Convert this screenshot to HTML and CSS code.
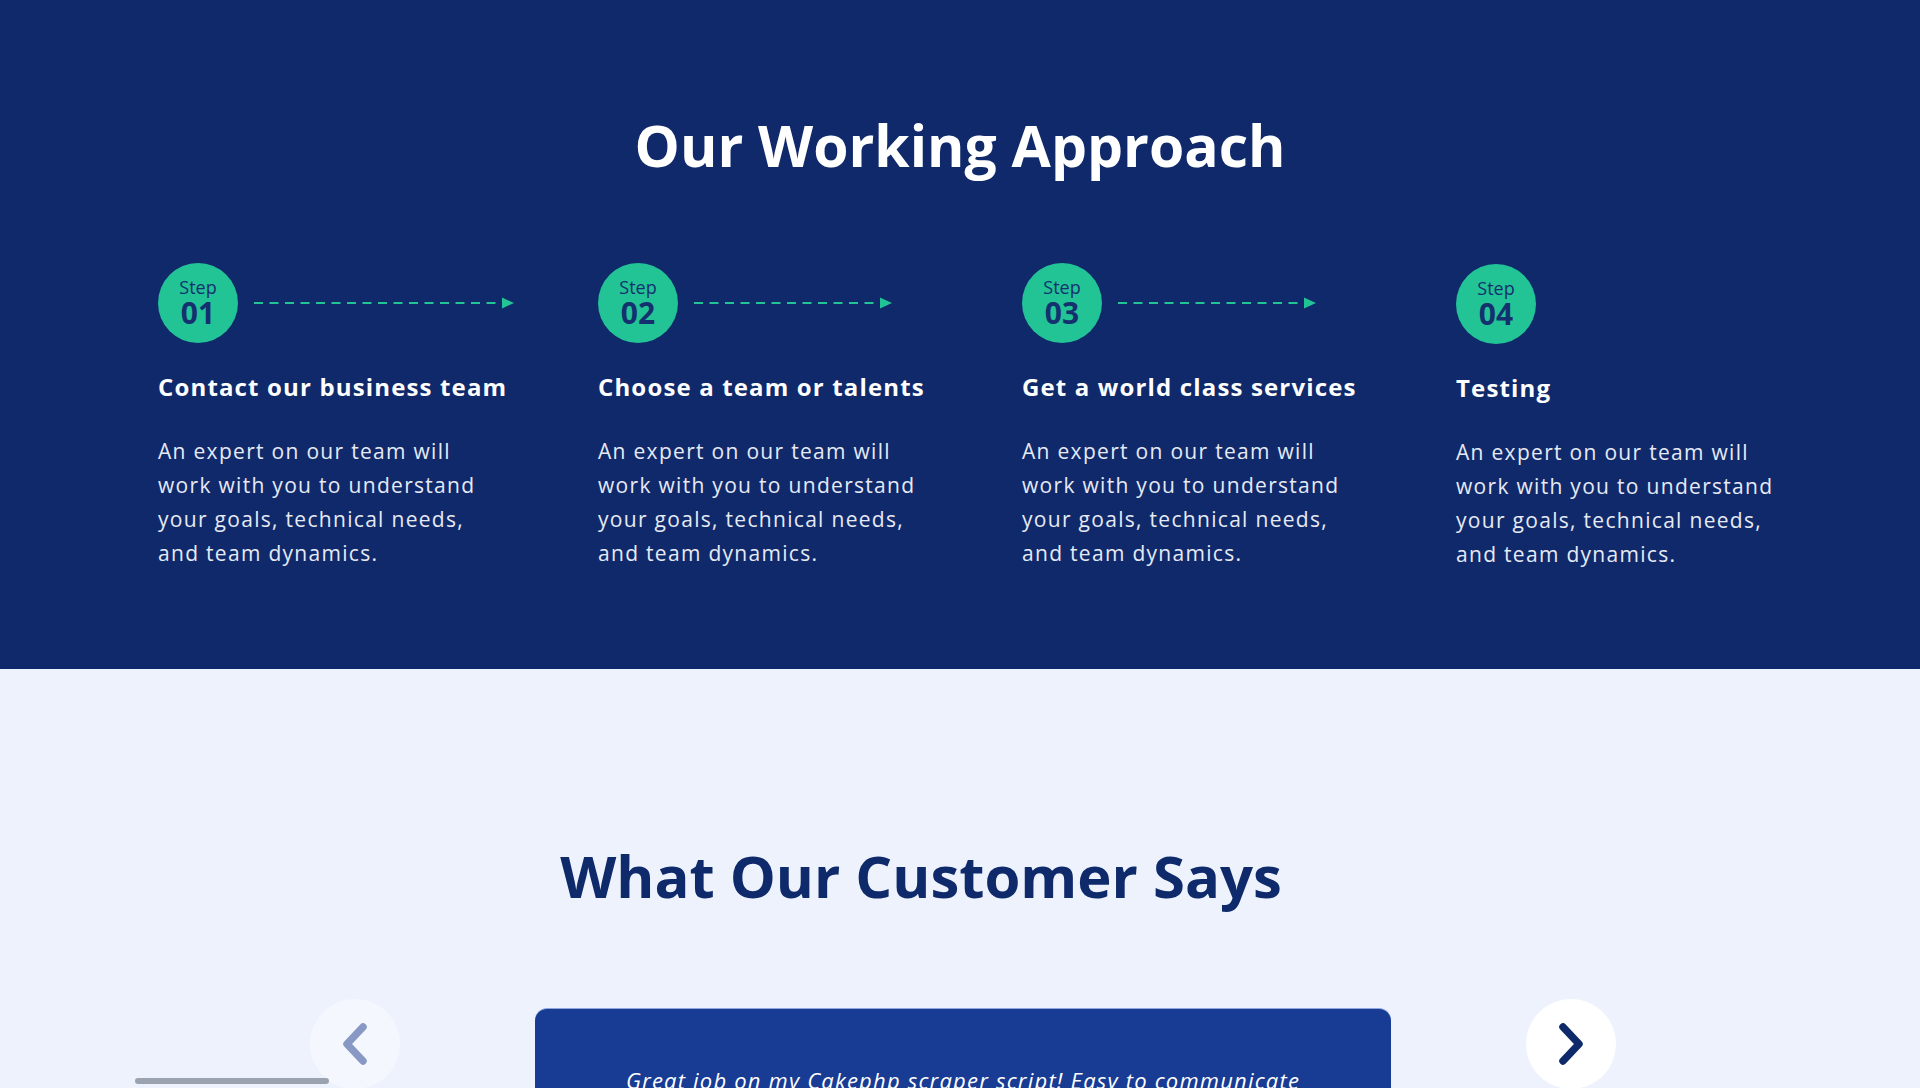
FILE: index.html
```html
<!DOCTYPE html>
<html lang="en">
<head>
<meta charset="utf-8">
<title>Our Working Approach</title>
<link rel="stylesheet" href="styles.css">
</head>
<body>
<section class="approach">
  <h2 class="approach-title">Our Working Approach</h2>
  <div class="steps">
    <div class="step">
      <div class="step-head">
        <div class="step-badge"><span class="step-label">Step</span><span class="step-num">01</span></div>
        <svg class="step-arrow" viewBox="0 0 260 14" width="260" height="14"><line x1="0" y1="7" x2="250" y2="7" stroke="#22c496" stroke-width="2" stroke-dasharray="9 6.5"/><path d="M248 1.5 L260 7 L248 12.5 Z" fill="#22c496"/></svg>
      </div>
      <h3 class="step-title">Contact our business team</h3>
      <p class="step-text">An expert on our team will<br>work with you to understand<br>your goals, technical needs,<br>and team dynamics.</p>
    </div>
    <div class="step">
      <div class="step-head">
        <div class="step-badge"><span class="step-label">Step</span><span class="step-num">02</span></div>
        <svg class="step-arrow" viewBox="0 0 198 14" width="198" height="14"><line x1="0" y1="7" x2="188" y2="7" stroke="#22c496" stroke-width="2" stroke-dasharray="9 6.5"/><path d="M186 1.5 L198 7 L186 12.5 Z" fill="#22c496"/></svg>
      </div>
      <h3 class="step-title">Choose a team or talents</h3>
      <p class="step-text">An expert on our team will<br>work with you to understand<br>your goals, technical needs,<br>and team dynamics.</p>
    </div>
    <div class="step">
      <div class="step-head">
        <div class="step-badge"><span class="step-label">Step</span><span class="step-num">03</span></div>
        <svg class="step-arrow" viewBox="0 0 198 14" width="198" height="14"><line x1="0" y1="7" x2="188" y2="7" stroke="#22c496" stroke-width="2" stroke-dasharray="9 6.5"/><path d="M186 1.5 L198 7 L186 12.5 Z" fill="#22c496"/></svg>
      </div>
      <h3 class="step-title">Get a world class services</h3>
      <p class="step-text">An expert on our team will<br>work with you to understand<br>your goals, technical needs,<br>and team dynamics.</p>
    </div>
    <div class="step step-last">
      <div class="step-head">
        <div class="step-badge"><span class="step-label">Step</span><span class="step-num">04</span></div>
      </div>
      <h3 class="step-title">Testing</h3>
      <p class="step-text">An expert on our team will<br>work with you to understand<br>your goals, technical needs,<br>and team dynamics.</p>
    </div>
  </div>
</section>

<section class="reviews">
  <h2 class="reviews-title">What Our Customer Says</h2>
  <div class="carousel">
    <button class="nav-btn nav-prev" aria-label="Previous">
      <svg viewBox="0 0 26 42" width="26" height="42"><path d="M21 4 L5 21 L21 38" fill="none" stroke="#8798c4" stroke-width="7.5" stroke-linecap="round" stroke-linejoin="round"/></svg>
    </button>
    <div class="review-card">
      <p class="review-quote">Great job on my Cakephp scraper script! Easy to communicate with and delivered exactly what I needed.</p>
    </div>
    <button class="nav-btn nav-next" aria-label="Next">
      <svg viewBox="0 0 26 42" width="26" height="42"><path d="M5 4 L21 21 L5 38" fill="none" stroke="#0f2a6b" stroke-width="7.5" stroke-linecap="round" stroke-linejoin="round"/></svg>
    </button>
    <div class="scroll-bar"></div>
  </div>
</section>
</body>
</html>
```

FILE: styles.css
```css
* { box-sizing: border-box; }

html, body {
  margin: 0;
  padding: 0;
}

body {
  font-family: "Open Sans", "Liberation Sans", sans-serif;
  background: #edf2fd;
}

.approach {
  background: #10296b;
  height: 669px;
  padding-top: 111px;
}

.approach-title {
  margin: 0;
  color: #ffffff;
  text-align: center;
  font-size: 57px;
  font-weight: 700;
  line-height: 1.2;
}

.steps {
  display: grid;
  grid-template-columns: 440px 424px 434px 1fr;
  padding-left: 158px;
  margin-top: 84px;
}

.step-head {
  display: flex;
  align-items: center;
  gap: 16px;
}

.step-badge {
  width: 80px;
  height: 80px;
  border-radius: 50%;
  background: #22c496;
  color: #14306f;
  display: flex;
  flex-direction: column;
  align-items: center;
  justify-content: center;
}

.step-label {
  font-size: 18px;
  line-height: 20px;
  font-weight: 400;
}

.step-num {
  font-size: 30px;
  line-height: 32px;
  font-weight: 700;
}

.step-arrow {
  display: block;
}

.step-title {
  margin: 28px 0 0;
  color: #ffffff;
  font-size: 24px;
  line-height: 31px;
  font-weight: 700;
  letter-spacing: 1.15px;
  white-space: nowrap;
}

.step-text {
  margin: 32px 0 0;
  color: #e6eaf4;
  font-size: 21px;
  line-height: 34px;
  font-weight: 400;
  letter-spacing: 1.3px;
  white-space: nowrap;
}

.step-last {
  padding-top: 1px;
}

.reviews {
  position: relative;
  padding-top: 172px;
  padding-bottom: 80px;
}

.reviews-title {
  margin: 0;
  padding-right: 78px;
  color: #0f2a6b;
  text-align: center;
  font-size: 58px;
  font-weight: 700;
  line-height: 1.2;
}

.carousel {
  position: relative;
  display: flex;
  justify-content: center;
  align-items: flex-start;
  gap: 135px;
  padding-left: 6px;
  margin-top: 88px;
}

.nav-btn {
  width: 90px;
  height: 90px;
  border: none;
  border-radius: 50%;
  padding: 0;
  display: flex;
  align-items: center;
  justify-content: center;
  flex-shrink: 0;
}

.nav-prev {
  background: #f4f7fe;
}

.nav-next {
  background: #ffffff;
}

.nav-btn svg {
  display: block;
  width: 26px;
  height: 42px;
}

.review-card {
  width: 856px;
  min-height: 320px;
  margin-top: 10px;
  background: #183b94;
  border-radius: 12px;
  box-shadow: 0 -1px 0 #8fa8e0;
  padding: 54px 70px 60px;
}

.review-quote {
  margin: 0;
  color: #ffffff;
  font-size: 22px;
  line-height: 34px;
  font-style: italic;
  letter-spacing: 1.2px;
  text-align: center;
}

.scroll-bar {
  position: absolute;
  left: 135px;
  top: 79px;
  width: 194px;
  height: 6px;
  border-radius: 3px;
  background: #9ba3b0;
}
```
